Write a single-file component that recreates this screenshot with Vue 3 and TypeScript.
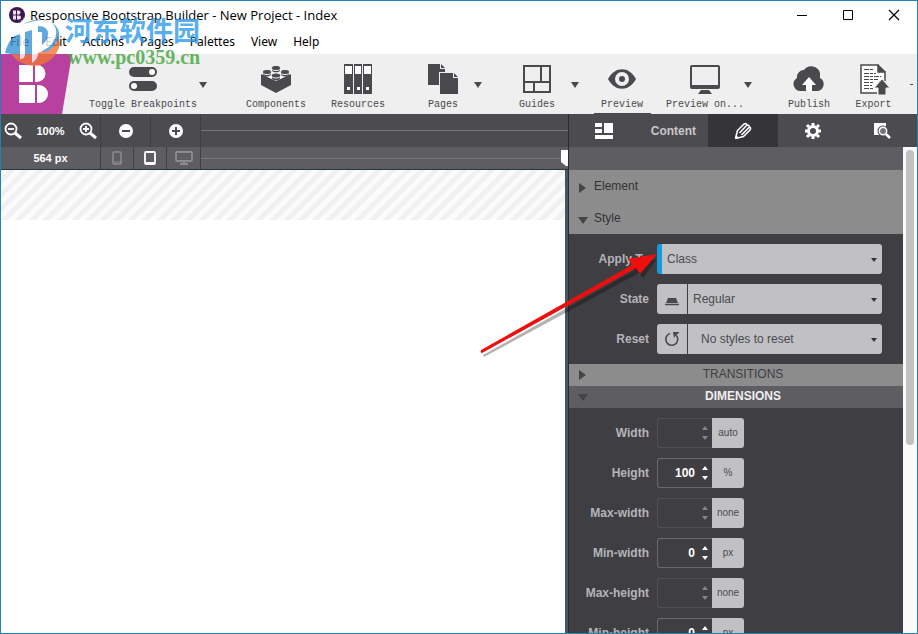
<script setup lang="ts">
import { ref } from 'vue'

interface Dimension {
  id: string
  label: string
  value: number | null
  unit: string
}

const menus = ['File', 'Edit', 'Actions', 'Pages', 'Palettes', 'View', 'Help']
const applyTo = ref('Class')
const state = ref('Regular')
const reset = ref('No styles to reset')
const dimensions = ref<Dimension[]>([
  { id: 'width', label: 'Width', value: null, unit: 'auto' },
  { id: 'height', label: 'Height', value: 100, unit: '%' },
  { id: 'max-width', label: 'Max-width', value: null, unit: 'none' },
  { id: 'min-width', label: 'Min-width', value: 0, unit: 'px' },
  { id: 'max-height', label: 'Max-height', value: null, unit: 'none' },
  { id: 'min-height', label: 'Min-height', value: 0, unit: 'px' },
])

function step(d: Dimension, by: number) {
  d.value = (d.value ?? 0) + by
}
</script>

<template>
  <div class="window">
    <header class="titlebar">
      <svg class="app-icon" width="16" height="16" viewBox="0 0 16 16">
        <circle cx="8" cy="8" r="8" fill="#3b1a4f" />
        <path d="M4 3.500h3v4H4zM8 3.500h1.500a2 2 0 0 1 0 4H8zM4 8.500h3v4H4zM8 8.500h2a2 2 0 0 1 0 4H8z" fill="#f3dff0" />
      </svg>
      <h1 class="title">Responsive Bootstrap Builder - New Project - Index</h1>
      <div class="window-buttons">
        <button aria-label="Minimize"><svg width="12" height="12"><path d="M1 6.500h10" stroke="#000" /></svg></button>
        <button aria-label="Maximize"><svg width="12" height="12"><path d="M1.500 1.500h9v9h-9z" fill="none" stroke="#000" /></svg></button>
        <button aria-label="Close"><svg width="12" height="12"><path d="M1 1l10 10M11 1L1 11" stroke="#000" stroke-width="1.200" /></svg></button>
      </div>
    </header>

    <nav class="menubar">
      <button v-for="m in menus" :key="m">{{ m }}</button>
    </nav>

    <div class="toolbar">
      <div class="brand">
        <svg width="71" height="60" viewBox="0 0 71 60">
          <path d="M0 0H71L61 60H0z" fill="#b8409e" />
          <path d="M18 11h14v17H18zM34 11h2a8.500 8.500 0 0 1 0 17h-2zM18 31h16v18H18zM36 31h2a9 9 0 0 1 0 18h-2z" fill="#fff" />
        </svg>
      </div>
      <div class="tool-group">
        <button class="tool">
          <svg width="30" height="32" viewBox="0 0 30 32">
            <rect x="1" y="4" width="28" height="10" rx="5" /><rect x="1" y="18" width="28" height="10" rx="5" />
            <circle cx="24" cy="9" r="3" fill="#fff" /><circle cx="6" cy="23" r="3" fill="#fff" />
          </svg>
          <span>Toggle Breakpoints</span>
        </button>
        <button class="caret" aria-label="Breakpoint options"><svg width="8" height="6"><path d="M0 0h8L4 6z" /></svg></button>
      </div>
      <div class="tool-group">
        <button class="tool">
          <svg width="32" height="32" viewBox="0 0 32 32">
            <path d="M1 11l15 7 15-7v11l-15 8L1 22z" />
            <path d="M2 11L16 5l14 6-14 7z" fill="#fff" />
            <path d="M12 5v3q4 3 8 0V5zM3 10v2q4 3 8 0v-2zM21 10v2q4 3 8 0v-2zM12 13v3q4 3 8 0v-3z" />
            <g stroke="#efefef"><ellipse cx="16" cy="5" rx="4.500" ry="2.500" /><ellipse cx="7" cy="9" rx="4.500" ry="2.500" /><ellipse cx="25" cy="9" rx="4.500" ry="2.500" /><ellipse cx="16" cy="12.500" rx="4.500" ry="2.500" /></g>
          </svg>
          <span>Components</span>
        </button>
      </div>
      <div class="tool-group">
        <button class="tool">
          <svg width="30" height="32" viewBox="0 0 30 32">
            <path d="M1 1h9v30H1zM11 1h8v30h-8zM20 1h9v30h-9z" />
            <path d="M2 3h7v8H2zM12 3h6v8h-6zM21 3h7v8h-7zM4 24h3v3H4zM14 24h3v3h-3zM23 24h3v3h-3z" fill="#fff" />
          </svg>
          <span>Resources</span>
        </button>
      </div>
      <div class="tool-group">
        <button class="tool">
          <svg width="32" height="32" viewBox="0 0 32 32">
            <path d="M1 1h12v5h5v3h-6v13H1zM14 1l4 4h-4z" />
            <path d="M13 10h13v5h5v16H13zM27 10l4 4h-4z" />
          </svg>
          <span>Pages</span>
        </button>
        <button class="caret" aria-label="Page list"><svg width="8" height="6"><path d="M0 0h8L4 6z" /></svg></button>
      </div>
      <div class="tool-group">
        <button class="tool">
          <svg width="30" height="32" viewBox="0 0 30 32">
            <path d="M2 3h26v26H2zM2 19h26M19 3v16M12 19v10" fill="none" stroke="#4a494e" stroke-width="2" />
          </svg>
          <span>Guides</span>
        </button>
        <button class="caret wide" aria-label="Guide options"><svg width="8" height="6"><path d="M0 0h8L4 6z" /></svg></button>
      </div>
      <div class="tool-group">
        <button class="tool current">
          <svg width="30" height="32" viewBox="0 0 30 32">
            <path fill-rule="evenodd" d="M1 16C8 3 22 3 29 16C22 29 8 29 1 16zM15 9a7 7 0 1 0 0 14 7 7 0 0 0 0-14z" /><circle cx="15" cy="16" r="3" />
          </svg>
          <span>Preview</span>
        </button>
      </div>
      <div class="tool-group">
        <button class="tool">
          <svg width="32" height="32" viewBox="0 0 32 32">
            <path fill-rule="evenodd" d="M3 2h26q2 0 2 2v20q0 2-2 2H3q-2 0-2-2V4q0-2 2-2zM3 4v18h26V4z" /><path d="M12 27h8l3 4H9z" />
          </svg>
          <span>Preview on...</span>
        </button>
        <button class="caret narrow" aria-label="Preview targets"><svg width="8" height="6"><path d="M0 0h8L4 6z" /></svg></button>
      </div>
      <div class="tool-group">
        <button class="tool">
          <svg width="32" height="32" viewBox="0 0 32 32">
            <path d="M8 28a7 7 0 0 1-4-13a7 7 0 0 1 7-8a9 9 0 0 1 16 3v5a7 7 0 0 1-2 13z" /><path d="M16 14l7 8h-4v7h-6v-7H9z" fill="#fff" />
          </svg>
          <span>Publish</span>
        </button>
      </div>
      <div class="tool-group">
        <button class="tool">
          <svg width="32" height="32" viewBox="0 0 32 32">
            <path d="M19 30H3V2h17v7h7v9" fill="#fff" stroke="#4a494e" stroke-width="1.500" /><path d="M20 1l8 8h-8z" />
            <path d="M6 6.500h10M6 10.500h12M6 13.500h17M6 16.500h14M6 19.500h10M6 22.500h8M6 25.500h10" fill="none" stroke="#4a494e" stroke-dasharray="5 1 3 1" />
            <path d="M24 16l8 9h-4v7h-8v-7h-4z" stroke="#efefef" />
          </svg>
          <span>Export</span>
        </button>
      </div>
      <button class="overflow" aria-label="More tools"><svg width="4" height="2"><path d="M0 0h3v1H0z" /></svg></button>
    </div>

    <main class="workspace">
      <section class="stage">
        <div class="zoom-row">
          <div class="zoom-cell">
            <button aria-label="Zoom out"><svg width="18" height="18" viewBox="0 0 18 18"><circle cx="7" cy="7" r="5.500" fill="none" stroke="#fff" stroke-width="1.800" /><path d="M4 7h6" stroke="#fff" stroke-width="1.800" /><path d="M11 11l6 5" stroke="#fff" stroke-width="3" /></svg></button>
            <span>100%</span>
            <button aria-label="Zoom in"><svg width="18" height="18" viewBox="0 0 18 18"><circle cx="7" cy="7" r="5.500" fill="none" stroke="#fff" stroke-width="1.800" /><path d="M4 7h6M7 4v6" stroke="#fff" stroke-width="1.800" /><path d="M11 11l6 5" stroke="#fff" stroke-width="3" /></svg></button>
          </div>
          <button class="round" aria-label="Remove breakpoint"><svg width="14" height="14"><circle cx="7" cy="7" r="7" fill="#fff" /><path d="M3 7h8" stroke="#4c4b50" stroke-width="2" /></svg></button>
          <button class="round" aria-label="Add breakpoint"><svg width="14" height="14"><circle cx="7" cy="7" r="7" fill="#fff" /><path d="M3 7h8M7 3v8" stroke="#4c4b50" stroke-width="2" /></svg></button>
          <div class="track"></div>
        </div>
        <div class="size-row">
          <span class="size">564 px</span>
          <button class="device" aria-label="Phone"><svg width="10" height="14"><rect x="1" y="1" width="8" height="12" rx="1" fill="none" stroke="#8d8c90" stroke-width="1.500" /><path d="M1 11h8" stroke="#8d8c90" /></svg></button>
          <button class="device" aria-label="Tablet"><svg width="12" height="14"><rect x="1" y="1" width="10" height="12" rx="1" fill="none" stroke="#fff" stroke-width="1.800" /><path d="M2 11.500h8" stroke="#fff" /></svg></button>
          <button class="device" aria-label="Desktop"><svg width="18" height="14"><rect x="1" y="1" width="16" height="9" rx="1" fill="none" stroke="#8d8c90" stroke-width="1.800" /><path d="M5 13h8M9 10v3" stroke="#8d8c90" stroke-width="2" /></svg></button>
          <div class="track"><svg class="handle" width="7" height="16"><path d="M0 0h7v16H5L0 12z" fill="#fff" /></svg></div>
        </div>
        <div class="canvas"><div class="hatch"></div></div>
      </section>

      <aside class="side">
        <div class="tabs">
          <button class="tab" aria-label="Layout"><svg width="18" height="16"><path d="M0 0h7v4H0zM0 6h7v4H0zM9 0h9v10H9zM0 12h18v4H0z" fill="#fff" /></svg></button>
          <button class="tab content">Content</button>
          <button class="tab selected" aria-label="Style">
            <svg width="18" height="18" viewBox="0 0 18 18"><path d="M1.500 16.500l2-8 6.500-6.500q2.500-1 3 1M1.500 16.500l8-2 6.500-6.500q1.500-2.500-1-3M5.500 11l7.500-8q3 0 2 2.500L7.500 13" fill="none" stroke="#fff" stroke-width="1.600" stroke-linejoin="round" /><path d="M1 17l1-4 3 3z" fill="#fff" /></svg>
          </button>
          <button class="tab" aria-label="Settings">
            <svg width="18" height="18" viewBox="-9 -9 18 18"><circle r="4.500" fill="none" stroke="#fff" stroke-width="3" /><path d="M0-5v-3M0 5v3M5 0h3M-5 0h-3M4 4l2 2M-4-4l-2-2M4-4l2-2M-4 4l-2 2" stroke="#fff" stroke-width="3" /></svg>
          </button>
          <button class="tab" aria-label="Inspect">
            <svg width="18" height="18" viewBox="0 0 18 18"><path d="M1 1h12v12H1z" fill="#fff" /><circle cx="10" cy="9" r="5.500" fill="#4c4b50" /><circle cx="10" cy="9" r="3.700" fill="#77767a" stroke="#fff" stroke-width="1.500" /><path d="M13 12l4 4" stroke="#fff" stroke-width="2.500" /></svg>
          </button>
        </div>
        <div class="scroller">
          <div class="panel">
            <div class="spacer"></div>
            <button class="section"><svg width="8" height="10"><path d="M1 0l7 5-7 5z" /></svg>Element</button>
            <button class="section"><svg width="10" height="8"><path d="M0 1h10L5 8z" /></svg>Style</button>
            <div class="form">
              <div class="field">
                <label for="apply">Apply To</label>
                <div class="control accent">
                  <select id="apply" v-model="applyTo"><option>Class</option></select>
                  <svg class="arrow" width="6" height="4"><path d="M0 0h6L3 4z" /></svg>
                </div>
              </div>
              <div class="field">
                <label for="state">State</label>
                <div class="control">
                  <button class="addon" aria-label="Regular state"><svg width="16" height="16"><path d="M4 7h8l2 5H2z" /><path d="M1 13.500h14" stroke="#4a494e" stroke-width="1.500" /></svg></button>
                  <select id="state" v-model="state"><option>Regular</option></select>
                  <svg class="arrow" width="6" height="4"><path d="M0 0h6L3 4z" /></svg>
                </div>
              </div>
              <div class="field">
                <label for="reset">Reset</label>
                <div class="control">
                  <button class="addon" aria-label="Reset styles"><svg width="16" height="16"><path d="M6 2.500a6 6 0 1 0 6 1.500" fill="none" stroke="#4a494e" stroke-width="1.600" /><path d="M9 1h6v1l-3 2-2 3z" /></svg></button>
                  <select id="reset" v-model="reset" class="inset"><option>No styles to reset</option></select>
                  <svg class="arrow" width="6" height="4"><path d="M0 0h6L3 4z" /></svg>
                </div>
              </div>
            </div>
            <button class="group"><svg width="8" height="10"><path d="M1 0l7 5-7 5z" /></svg><span>TRANSITIONS</span></button>
            <button class="group open"><svg width="10" height="8"><path d="M0 1h10L5 8z" /></svg><span>DIMENSIONS</span></button>
            <div class="form">
              <div v-for="d in dimensions" :key="d.id" class="field">
                <label :for="d.id">{{ d.label }}</label>
                <div class="number" :class="{ empty: d.value === null }">
                  <input :id="d.id" v-model="d.value" type="number" />
                  <div class="spin">
                    <button aria-label="Increase" @click="step(d, 1)"><svg width="6" height="4"><path d="M0 4h6L3 0z" /></svg></button>
                    <button aria-label="Decrease" @click="step(d, -1)"><svg width="6" height="4"><path d="M0 0h6L3 4z" /></svg></button>
                  </div>
                </div>
                <button class="unit">{{ d.unit }}</button>
              </div>
            </div>
          </div>
          <div class="scrollbar"><div class="thumb"></div></div>
        </div>
      </aside>
    </main>

    <div class="watermark">
      <svg width="60" height="60" viewBox="0 0 60 60">
        <path d="M6 44A27 27 0 0 0 56 36q0-6-3-11-2 16-20 20-14 3-27-1z" fill="#f2763a" />
        <path d="M1 45q3-12 8-15A27 27 0 0 1 52 18q8 10-4 22-4 4-10 4V24h-4v21Q18 48 1 45z" fill="#3a94d2" />
        <path d="M2 32Q12 14 38 12q16 2 14 15-2 12-17 17v-5q9-5 9-13 0-8-10-8v27q0 6-6 10V22l-7 2v22q0 5-5 5V26Q8 28 2 32z" fill="#fff" />
        <path d="M20 9l1 3 3 1-3 1-1 3-1-3-3-1 3-1z" fill="#fff" />
      </svg>
      <div class="mark-text"><strong>河东软件园</strong><em>www.pc0359.cn</em></div>
    </div>

    <svg class="pointer" width="184" height="108" viewBox="0 0 184 108">
      <path d="M5 105L157 20l-3-5 25-6-14 19-4-5L6 107z" fill="#000" opacity=".3" />
      <path d="M3 100L154 15l-4-6 29-5-17 20-4-6L4 103q-2 0-1-3z" fill="#f00d0d" />
    </svg>
  </div>
</template>

<style>
body { margin: 0; }
</style>

<style scoped>
.window {
  position: relative;
  box-sizing: border-box;
  height: 100vh;
  display: flex;
  flex-direction: column;
  overflow: hidden;
  border: 1px solid #2580b4;
  background: #fff;
  font: 12px/16px "Liberation Sans", sans-serif;
  color: #4a494e;
}
.window * { box-sizing: border-box; }
button { margin: 0; padding: 0; border: 0; background: none; font: inherit; color: inherit; }
svg { display: block; flex: none; }

.titlebar { display: flex; align-items: center; height: 28px; flex: none; padding-left: 8px; gap: 5px; }
.title { flex: 1; margin: 0; font: 13px/16px "Open Sans", sans-serif; color: #000; }
.window-buttons { display: flex; }
.window-buttons button { width: 46px; height: 28px; display: grid; place-items: center; }
.menubar { display: flex; gap: 16px; height: 25px; flex: none; padding-left: 9px; font: 12px/26px "Noto Sans", sans-serif; color: #000; }

.toolbar {
  flex: none;
  display: grid;
  grid-template-columns: 71px minmax(0, 154fr) minmax(0, 100fr) minmax(0, 64fr) minmax(0, 118fr) minmax(0, 76fr) minmax(0, 76fr) minmax(0, 98fr) minmax(0, 102fr) minmax(0, 27fr) minmax(0, 30fr);
  height: 60px;
  background: #efefef;
  fill: #4a494e;
}
.tool-group { display: flex; justify-content: center; }
.tool { flex: none; min-width: 57px; padding-top: 9px; display: flex; flex-direction: column; align-items: center; gap: 2px; font: 10px/16px "Liberation Mono", monospace; white-space: nowrap; border-bottom: 2px solid transparent; }
.tool.current { border-bottom-color: #4a494e; }
.caret { width: 12px; flex: none; display: grid; place-items: center; }
.caret.wide { width: 18px; }
.caret.narrow { width: 8px; }
.overflow { display: flex; align-items: center; justify-content: flex-end; padding-right: 3px; }

.workspace { flex: 1; min-height: 0; display: flex; }
.stage { flex: 1; min-width: 0; display: flex; flex-direction: column; border-right: 1px solid #2b2a2e; background: #4c4b50; color: #fff; font-size: 11px; font-weight: bold; }
.zoom-row, .size-row { display: grid; flex: none; }
.zoom-row { grid-template-columns: 100px 50px 50px 1fr; height: 33px; }
.size-row { grid-template-columns: 100px 33px 33px 34px 1fr; height: 23px; background: #5e5d61; border-bottom: 1px solid #253842; }
.zoom-row > *, .size-row > * { border-right: 1px solid #403f43; }
.zoom-cell { display: flex; align-items: center; justify-content: space-between; padding: 0 3px; }
.round, .device { display: grid; place-items: center; }
.size { text-align: center; line-height: 22px; }
.track { display: flex; align-items: center; justify-content: flex-end; background: linear-gradient(#77767a, #77767a) center / 100% 1px no-repeat; }
.zoom-row .track, .size-row .track { border-right: 0; }
.canvas { flex: 1; background: #fff; border-right: 3px solid #44565e; }
.hatch { height: 50px; background: repeating-linear-gradient(135deg, #fbfbfb 0 5px, #f1f1f1 5px 10px); }

.side { width: 348px; flex: none; display: flex; flex-direction: column; }
.tabs { flex: none; display: grid; grid-template-columns: 1fr 1fr 1fr 1fr 1fr; height: 33px; background: #4c4b50; }
.tab { display: grid; place-items: center; color: #c8c8ca; font-weight: bold; }
.tab.selected { background: #353439; }
.scroller { flex: 1; min-height: 0; display: flex; }
.panel { flex: 1; min-width: 0; overflow: hidden; background: #3f3e43; }
.spacer { height: 23px; background: #5e5d61; }
.section { display: flex; align-items: center; gap: 6px; width: 100%; height: 32px; padding-left: 9px; background: #8c8c8c; color: #333236; text-align: left; }
.section svg { width: 10px; margin-top: 4px; fill: #444347; }
.form { display: flex; flex-direction: column; gap: 10px; padding: 10px 21px 10px 0; }
.field { display: flex; height: 30px; }
.field label { width: 80px; flex: none; margin-right: 8px; line-height: 30px; text-align: right; font-weight: bold; color: #b5b4b8; white-space: nowrap; }
.control { position: relative; flex: 1; display: flex; border-radius: 3px; overflow: hidden; background: #c1c1c4; }
.control.accent { border-left: 5px solid #139bdd; }
.control select { appearance: none; flex: 1; min-width: 0; border: 0; border-radius: 0; padding: 0 20px 0 5px; background: none; color: #4a494e; font: inherit; }
.control select.inset { padding-left: 13px; }
.arrow { position: absolute; right: 5px; top: 14px; fill: #333236; pointer-events: none; }
.addon { width: 31px; flex: none; display: grid; place-items: center; border-right: 1px solid #3f3e43; fill: #4a494e; }
.group { display: flex; align-items: center; width: 100%; height: 22px; padding: 0 5px 0 9px; background: #8c8c8c; color: #3f3e43; }
.group svg { width: 10px; fill: #444347; }
.group span { flex: 1; text-align: center; line-height: 18px; padding-bottom: 2px; }
.group.open { background: #5e5d61; color: #efefef; font-weight: bold; }
.number { width: 55px; display: flex; border: 1px solid #69686c; border-right: 0; border-radius: 3px 0 0 3px; fill: #fff; }
.number.empty { border-color: #504f54; fill: #858489; }
.number input { flex: 1; min-width: 0; width: 0; padding: 0 2px 0 0; border: 0; background: none; color: #fff; font: bold 12px/16px "Liberation Sans", sans-serif; text-align: right; appearance: textfield; }
.number input::-webkit-inner-spin-button { appearance: none; margin: 0; }
.spin { width: 15px; display: flex; flex-direction: column; align-items: center; justify-content: center; gap: 6px; }
.unit { width: 32px; border-radius: 0 3px 3px 0; background: #c1c1c4; color: #4a494e; font-size: 10px; }
.scrollbar { width: 14px; flex: none; padding: 3px 3px 0; background: #fafafa; }
.thumb { height: 61%; border-radius: 4px; background: #c1c1c1; }

.watermark { position: absolute; left: 3px; top: 7px; display: flex; gap: 1px; opacity: .8; pointer-events: none; }
.mark-text { display: flex; flex-direction: column; padding-top: 7px; }
.mark-text strong { font: bold 27px/30px "Noto Sans CJK SC", sans-serif; color: #2f9bec; white-space: nowrap; }
.mark-text em { padding-left: 3px; font: bold 20px/24px "Liberation Serif", serif; color: #45a63d; }
.pointer { position: absolute; left: 477px; top: 249px; pointer-events: none; }
</style>
